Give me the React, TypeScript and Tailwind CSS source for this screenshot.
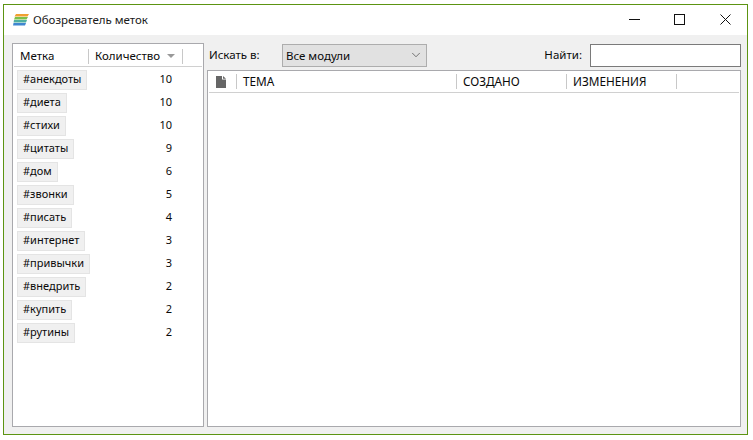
import React from 'react';
import { ChevronDown } from 'lucide-react';

const tags: [string, number][] = [
  ['#анекдоты', 10],
  ['#диета', 10],
  ['#стихи', 10],
  ['#цитаты', 9],
  ['#дом', 6],
  ['#звонки', 5],
  ['#писать', 4],
  ['#интернет', 3],
  ['#привычки', 3],
  ['#внедрить', 2],
  ['#купить', 2],
  ['#рутины', 2],
];

function Logo() {
  return (
    <svg width="16" height="12" viewBox="0 0 16 12" className="shrink-0">
      <path d="M3 0 H16 L14.5 2.5 H1.5 Z" fill="#f0a030" />
      <path d="M2 3 H15 L13.5 5.5 H1 Z" fill="#7cc04a" />
      <path d="M1 6 H14 L13 8.5 H0.5 Z" fill="#4fb0a0" />
      <path d="M0.5 9 H13 L12 11.5 H0 Z" fill="#3f86d0" />
    </svg>
  );
}

export default function App() {
  return (
    <div className="w-[753px] h-[440px] bg-white pt-1 pl-[3px] font-['Noto_Sans',sans-serif] text-[11.5px] text-[#0a0a0a]">
      <div className="w-[745px] h-[431px] border border-[#5c9412] flex flex-col">
        <div className="h-[30px] bg-white flex items-center shrink-0">
          <div className="ml-[9px] mr-[4px]">
            <Logo />
          </div>
          <span className="text-[#1a1a1a]">Обозреватель меток</span>
          <div className="ml-auto mr-[16px] mb-[1px] flex items-center gap-[34px]">
            <svg width="11" height="11" viewBox="0 0 11 11">
              <path d="M0 5.5 H11" stroke="#111" strokeWidth="1" />
            </svg>
            <div className="flex items-center gap-[35px]">
              <svg width="11" height="11" viewBox="0 0 11 11">
                <rect x="0.5" y="0.5" width="10" height="10" fill="none" stroke="#111" strokeWidth="1" />
              </svg>
              <svg width="11" height="11" viewBox="0 0 11 11">
                <path d="M0.5 0.5 L10.5 10.5 M10.5 0.5 L0.5 10.5" stroke="#111" strokeWidth="1" />
              </svg>
            </div>
          </div>
        </div>
        <div className="flex-1 bg-[#f0f0f0] flex gap-[3px] pl-2 pr-[6px] pt-2 pb-[7px] min-h-0">
          <div className="w-[192px] bg-white border border-[#a9a9ad] flex flex-col">
            <div className="h-[21px] mx-px border-b border-[#d0d0d0] flex items-center mt-[2px] shrink-0">
              <div className="w-[75px] pl-[6px] border-r border-[#c8c8c8] h-[15px] flex items-center">Метка</div>
              <div className="w-[94px] pl-[6px] pr-[7px] border-r border-[#c8c8c8] h-[15px] flex items-center justify-between">
                <span>Количество</span>
                <span className="w-0 h-0 border-l-[4px] border-r-[4px] border-t-[4px] border-l-transparent border-r-transparent border-t-[#999]" />
              </div>
            </div>
            <div className="flex flex-col pt-px">
              {tags.map(([name, count]) => (
                <div key={name} className="h-[23px] flex items-center shrink-0 pl-[4px]">
                  <div className="w-[138px]">
                    <span className="inline-flex h-[20px] items-center px-[5px] text-[11px] bg-[#f0f0f0] border border-[#e4e4e4]">{name}</span>
                  </div>
                  <div className="w-[17px] text-right text-[11px]">{count}</div>
                </div>
              ))}
            </div>
          </div>
          <div className="flex-1 flex flex-col gap-[3px] min-w-0">
            <div className="h-[24px] flex items-center shrink-0">
              <span className="ml-[2px] w-[73px]">Искать в:</span>
              <div className="w-[145px] h-[23px] bg-[#e1e1e1] border border-[#adadad] flex items-center justify-between pl-[3px] pr-[3px]">
                <span className="mt-[1px]">Все модули</span>
                <ChevronDown size={14} strokeWidth={1} className="text-[#222]" />
              </div>
              <span className="ml-auto mr-[8px]">Найти:</span>
              <div className="w-[151px] h-[23px] bg-white border border-[#7a7a7a]" />
            </div>
            <div className="flex-1 bg-white border border-[#a9a9ad]">
              <div className="h-[22px] mx-px border-b border-[#d0d0d0] flex items-center text-[11.8px]">
                <div className="w-[28px] h-[15px] pl-[7px] border-r border-[#c8c8c8] flex items-center">
                  <svg width="10" height="12" viewBox="0 0 10 12">
                    <path d="M0 0 H6 V3.5 H10 V12 H0 Z M7 0 L10 2.8 H7 Z" fill="#666" />
                  </svg>
                </div>
                <div className="w-[220px] h-[15px] pl-[6px] border-r border-[#c8c8c8] flex items-center">ТЕМА</div>
                <div className="w-[110px] h-[15px] pl-[6px] border-r border-[#c8c8c8] flex items-center">СОЗДАНО</div>
                <div className="w-[110px] h-[15px] pl-[6px] border-r border-[#c8c8c8] flex items-center">ИЗМЕНЕНИЯ</div>
              </div>
            </div>
          </div>
        </div>
      </div>
    </div>
  );
}
